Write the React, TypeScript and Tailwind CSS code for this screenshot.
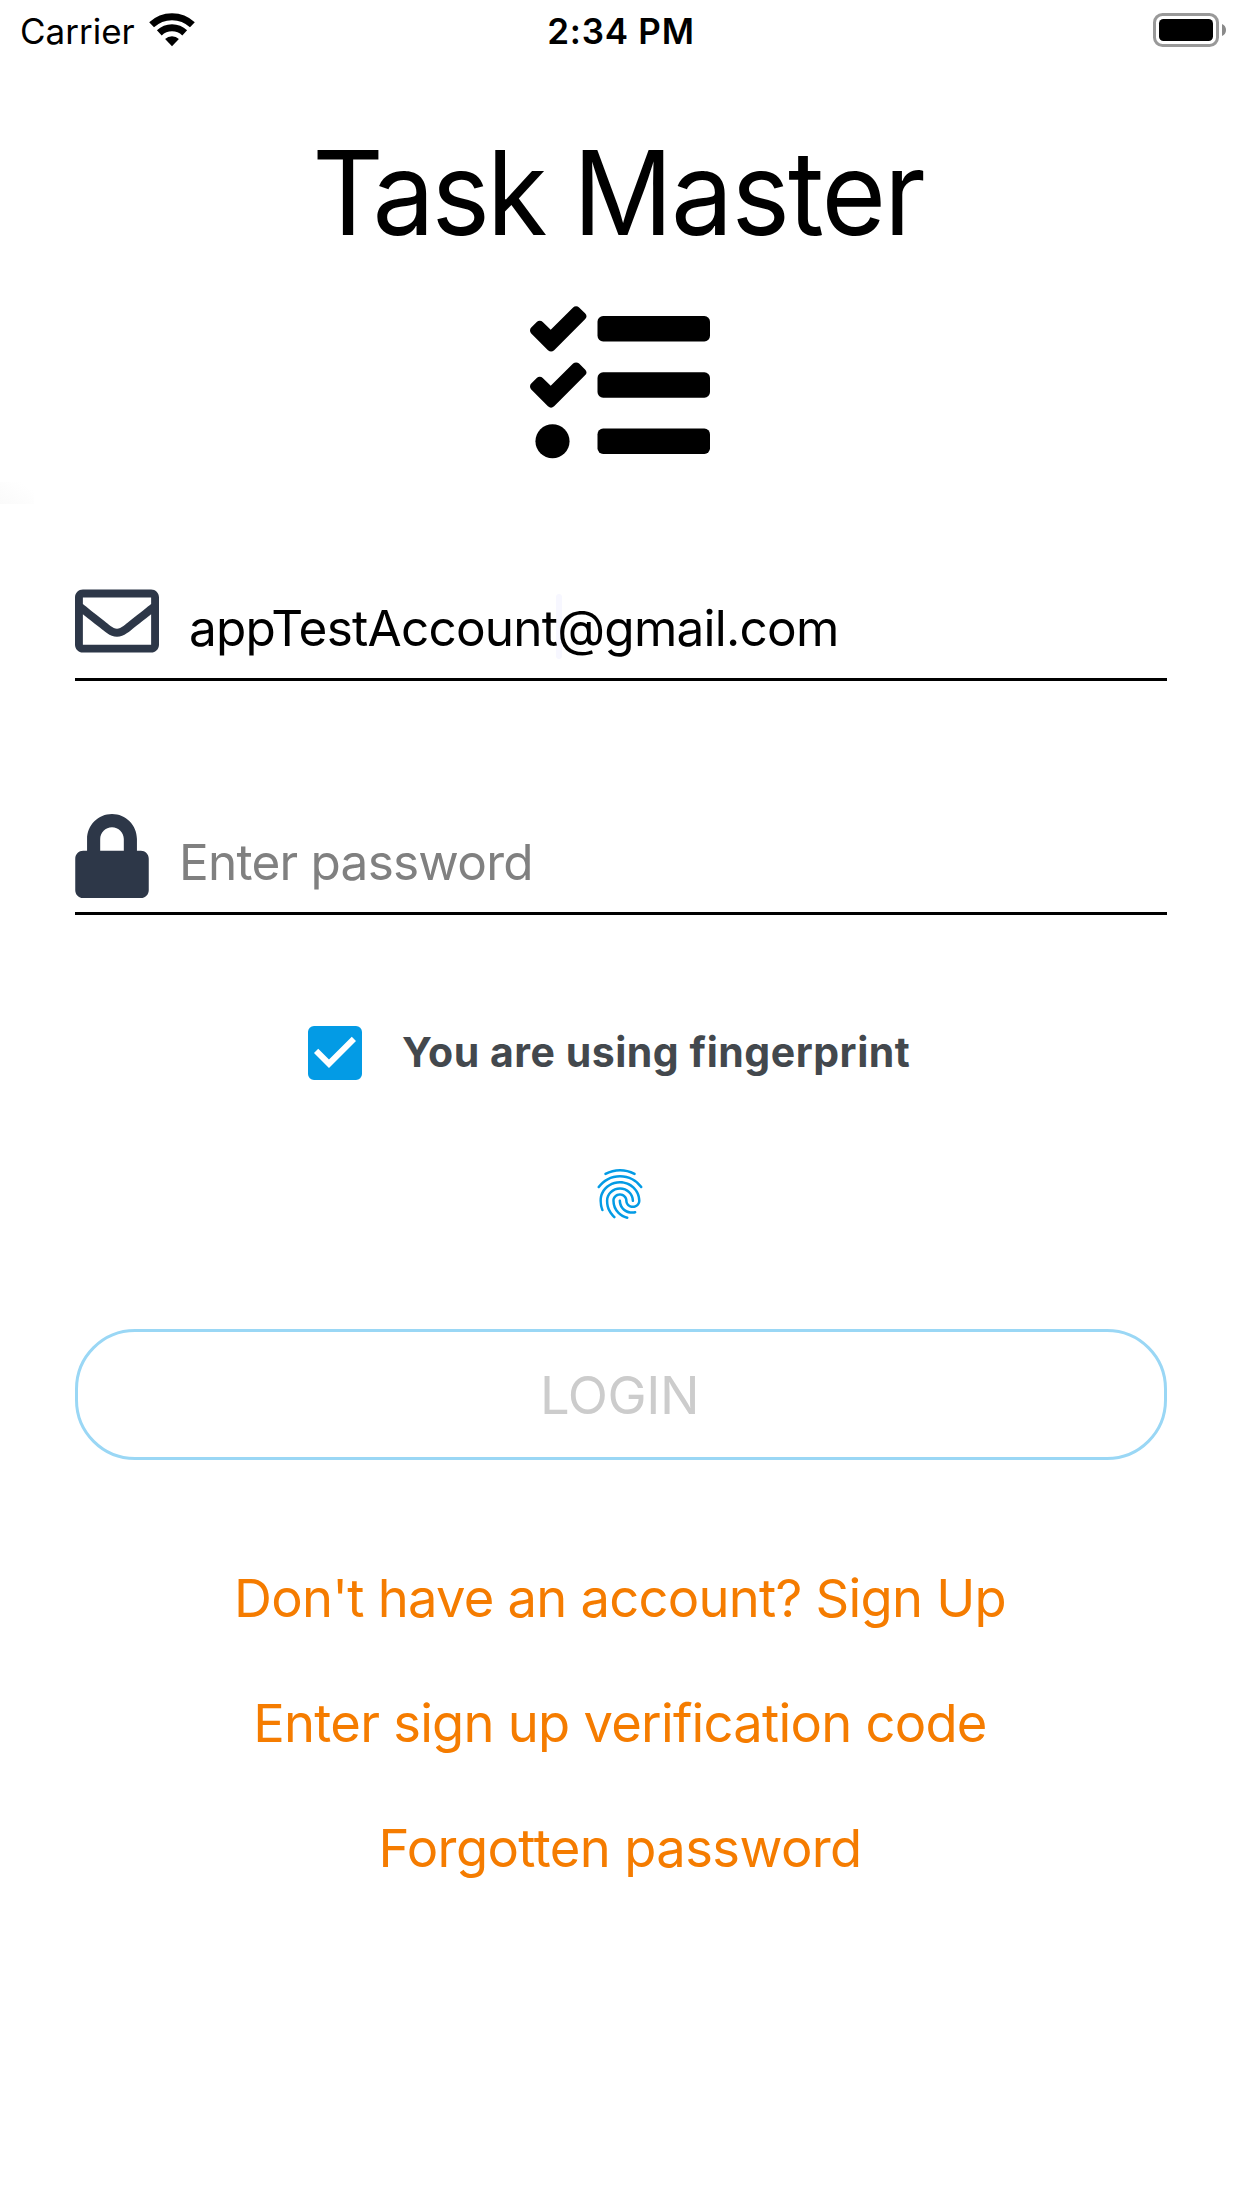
import type { ReactNode } from "react";
import { FaLock, FaRegEnvelope } from "react-icons/fa";
import { MdCheckBox, MdFingerprint } from "react-icons/md";

function WifiIcon() {
  return (
    <svg viewBox="0 0 46 34" className="h-[34px] w-[46px]" fill="none">
      <path d="M2.6 11.8A29.7 29.7 0 0 1 43.4 11.8" stroke="#000" strokeWidth="7" />
      <path d="M10.3 19.9A18.5 18.5 0 0 1 35.7 19.9" stroke="#000" strokeWidth="7" />
      <path d="M23 33.3L16.1 26.1A10 10 0 0 1 29.9 26.1Z" fill="#000" />
    </svg>
  );
}

function BatteryIcon() {
  return (
    <svg viewBox="0 0 74 34" className="h-[34px] w-[74px]" fill="none">
      <rect x="1.5" y="1.5" width="63" height="31" rx="8" stroke="#999" strokeWidth="3" />
      <rect x="6" y="6" width="54" height="22" rx="4.5" fill="#000" />
      <path d="M69 11C71.5 12 73 14.3 73 17S71.5 22 69 23Z" fill="#8a8a8a" />
    </svg>
  );
}

function TasksIcon() {
  return (
    <svg viewBox="0 0 512 512" className="size-[180px]" fill="#000">
      <path d="M139.61 35.5a12 12 0 0 0-17 0L58.93 98.81l-22.7-22.12a12 12 0 0 0-17 0L3.53 92.41a12 12 0 0 0 0 17l47.59 47.4a12.78 12.78 0 0 0 17.61 0l15.59-15.62L156.52 69a12.09 12.09 0 0 0 .09-17z" />
      <path d="M139.61 195.19a12 12 0 0 0-17 0l-63.68 63.22-22.7-22.1a12 12 0 0 0-17 0L3.53 252a12 12 0 0 0 0 17L51 316.5a12.77 12.77 0 0 0 17.6 0l15.7-15.69 72.2-72.22a12 12 0 0 0 .09-16.9z" />
      <circle cx="64" cy="416" r="48.5" />
      <rect x="192" y="60" width="320" height="72" rx="16" />
      <rect x="192" y="220" width="320" height="72" rx="16" />
      <rect x="192" y="380" width="320" height="72" rx="16" />
    </svg>
  );
}

function Field({ icon, children }: { icon: ReactNode; children: ReactNode }) {
  return (
    <div className="flex h-[106px] items-start gap-[30px] border-b-[3px] border-black pt-[4px] text-[49.5px] leading-[98px] tracking-[-0.76px] whitespace-nowrap">
      {icon}
      {children}
    </div>
  );
}

export default function App() {
  return (
    <div className="relative flex h-[2208px] w-[1242px] flex-col overflow-hidden bg-white font-['Inter',sans-serif] text-black">
      <header className="flex h-[60px] items-center text-[35px] leading-[60px]">
        <div className="flex flex-1 items-center gap-[14px] pl-[20px]">
          <span className="pt-[1px]">Carrier</span>
          <WifiIcon />
        </div>
        <span className="pt-[1px] pr-[5px] font-semibold tracking-[0.74px]">2:34 PM</span>
        <div className="flex flex-1 justify-end pr-[15px]">
          <BatteryIcon />
        </div>
      </header>

      <div className="absolute top-[482px] left-0 h-[22px] w-[34px] bg-gradient-to-tr from-[#fafafa] to-white to-80%" />

      <main className="flex flex-col px-[75px]">
        <h1 className="mt-[63px] flex origin-center scale-x-[0.95] justify-center gap-[30px] pr-[6px] text-[116.5px] leading-[140px] whitespace-nowrap">
          <span className="tracking-[-3.3px]">Task</span>{" "}
          <span className="tracking-[-1.9px]">Master</span>
        </h1>
        <div className="mt-[32px] flex justify-center pr-[2px]">
          <TasksIcon />
        </div>

        <div className="mt-[100px]">
          <Field icon={<FaRegEnvelope className="size-[84px] shrink-0 text-[#2d3748]" />}>
            <span className="relative">
              <i className="absolute top-[15px] left-[367px] h-[65px] w-[6px] rounded-full bg-[#f7f7ff]" />
              <span className="relative">appTestAccount@gmail.com</span>
            </span>
          </Field>
        </div>
        <div className="mt-[128px]">
          <Field icon={<FaLock className="mt-[0.5px] h-[84px] w-[74px] shrink-0 text-[#2d3748]" />}>
            <span className="text-[#808080]">Enter password</span>
          </Field>
        </div>

        <div className="mt-[102px] flex h-[72px] items-center pl-[224px]">
          <MdCheckBox className="size-[72px] text-[#039be5]" />
          <span className="mb-[2px] ml-[31px] text-[41px] leading-[70px] font-bold tracking-[0.52px] whitespace-nowrap text-[#43484d]">
            You are using fingerprint
          </span>
        </div>

        <div className="mt-[75px] flex justify-center pr-[2px]">
          <MdFingerprint className="size-[60px] text-[#039be5]" />
        </div>

        <button className="mt-[105px] h-[131px] rounded-[60px] border-[3px] border-[#9ad7f5] pt-[2px] pr-[3px] text-[52.5px] leading-[123px] tracking-[-0.4px] text-[#ccc]">
          LOGIN
        </button>

        <nav className="mt-[76px] flex flex-col items-center pr-[2px] text-[52.5px] leading-[125px] tracking-[-0.75px] whitespace-nowrap text-[#f57c00]">
          <a>Don't have an account? Sign Up</a>
          <a>Enter sign up verification code</a>
          <a className="tracking-[-0.6px]">Forgotten password</a>
        </nav>
      </main>
    </div>
  );
}
